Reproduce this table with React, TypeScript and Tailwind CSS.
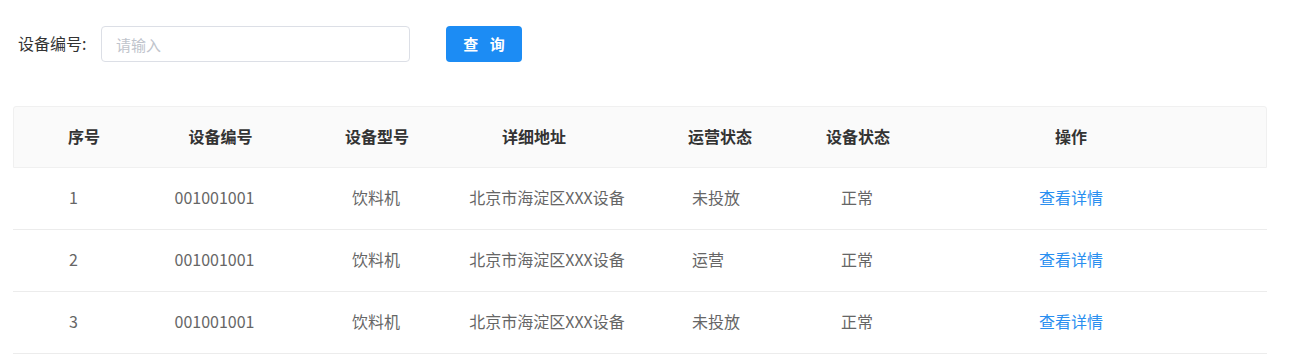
import React from "react";

const font = {
  fontFamily: '"Microsoft YaHei", "Noto Sans CJK SC", "Noto Sans", sans-serif',
};

type Row = {
  id: number;
  code: string;
  model: string;
  address: string;
  opStatus: string;
  devStatus: string;
};

const rows: Row[] = [
  { id: 1, code: "001001001", model: "饮料机", address: "北京市海淀区XXX设备", opStatus: "未投放", devStatus: "正常" },
  { id: 2, code: "001001001", model: "饮料机", address: "北京市海淀区XXX设备", opStatus: "运营", devStatus: "正常" },
  { id: 3, code: "001001001", model: "饮料机", address: "北京市海淀区XXX设备", opStatus: "未投放", devStatus: "正常" },
];

const gridCols = "grid grid-cols-[137px_145px_162px_172px_178px_100px_1fr]";

export default function App() {
  return (
    <div className="w-[1289px] h-[355px] bg-white overflow-hidden" style={font}>
      {/* search bar */}
      <div className="flex items-center h-[36px] mt-[26px] pl-[18px]">
        <span className="w-[83px] text-[16px] text-[#333] pb-[2px]">设备编号:</span>
        <input
          className="w-[309px] h-[36px] border border-[#dcdfe6] rounded-[4px] px-[14px] text-[15px] text-[#606266] outline-none placeholder:text-[#c0c4cc]"
          placeholder="请输入"
        />
        <button className="ml-[36px] w-[76px] h-[36px] rounded-[4px] bg-[#1c8cf4] text-white text-[15px] font-bold tracking-[4px] pl-[4px]">
          查 询
        </button>
      </div>

      {/* device table */}
      <div className="mt-[44px] mx-[13px] w-[1254px]">
        <div className={`${gridCols} h-[62px] items-center pb-[3px] bg-[#fafafa] border border-[#f0f0f0] rounded-t-[3px] text-[16px] font-bold text-[#333]`}>
          <div className="pl-[54px]">序号</div>
          <div className="text-center pr-[6px]">设备编号</div>
          <div className="text-center">设备型号</div>
          <div className="text-center pr-[20px]">详细地址</div>
          <div className="pl-[58px]">运营状态</div>
          <div className="text-center">设备状态</div>
          <div className="text-center pr-[32px]">操作</div>
        </div>
        {rows.map((r) => (
          <div
            key={r.id}
            className={`${gridCols} h-[62px] items-center pb-[3px] border-b border-[#ececec] text-[16px] text-[#666]`}
          >
            <div className="pl-[56px]">{r.id}</div>
            <div className="text-center pr-[16px]">{r.code}</div>
            <div className="text-center">{r.model}</div>
            <div className="text-center pl-[8px]">{r.address}</div>
            <div className="pl-[63px]">{r.opStatus}</div>
            <div className="text-center">{r.devStatus}</div>
            <div className="text-center pr-[32px]">
              <a className="text-[#2a8ff0] cursor-pointer">查看详情</a>
            </div>
          </div>
        ))}
      </div>
    </div>
  );
}
